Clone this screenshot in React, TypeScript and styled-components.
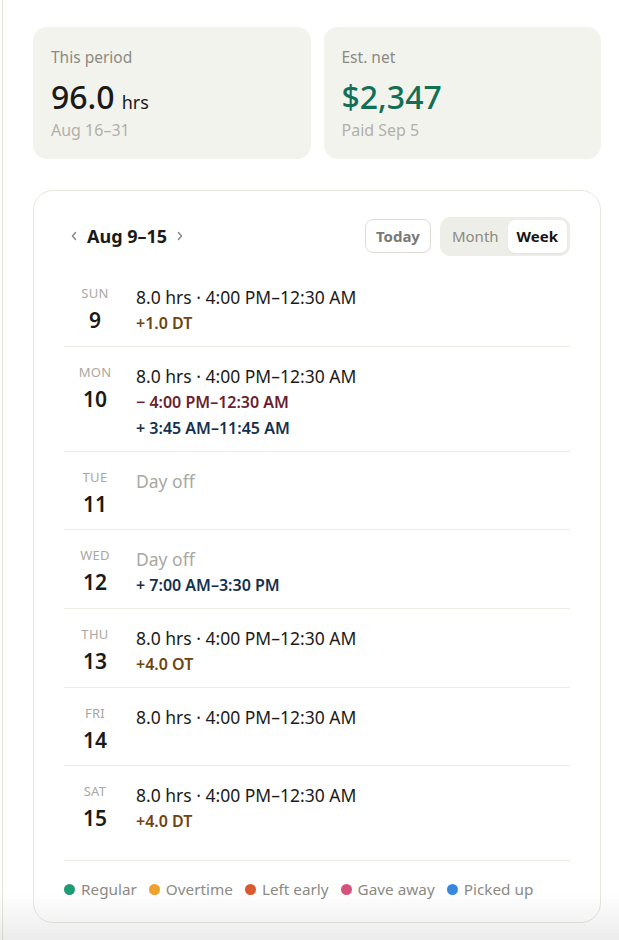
import styled, { createGlobalStyle } from "styled-components";

const GlobalStyle = createGlobalStyle`
  body {
    margin: 0;
    background: #ffffff;
    font-family: "Noto Sans", "Open Sans", "Liberation Sans", sans-serif;
    color: #1b1b19;
  }
`;

const Shell = styled.div`
  margin-left: 2px;
  min-height: 100vh;
  border-left: 1px solid #e7e6dc;
  padding: 27px 18px 18px 30px;
  box-sizing: border-box;
`;

const Stats = styled.div`
  display: grid;
  grid-template-columns: 1fr 1fr;
  gap: 13px;
`;

const StatCard = styled.div`
  background: #f3f3ee;
  border-radius: 14px;
  padding: 17px 18px 16px;
  height: 132px;
  box-sizing: border-box;
`;

const StatLabel = styled.div`
  font-size: 15.5px;
  line-height: 26px;
  color: #8b8a83;
`;

const StatValue = styled.div<{ $tone?: "green" }>`
  font-size: 32px;
  line-height: 44px;
  height: 44px;
  font-weight: 500;
  color: ${({ $tone }) => ($tone === "green" ? "#126f55" : "#1a1a18")};
  margin-top: 5px;
`;

const Unit = styled.span`
  font-size: 18px;
  line-height: 1;
  font-weight: 400;
  margin-left: 7px;
`;

const StatSub = styled.div`
  font-size: 16px;
  line-height: 22px;
  color: #b1b0a9;
`;

const Calendar = styled.section`
  margin-top: 31px;
  border: 1px solid #e8e7df;
  border-radius: 20px;
  padding: 25px 30px 22px;
`;

const Header = styled.div`
  display: flex;
  align-items: center;
  justify-content: space-between;
  height: 40px;
  margin-bottom: 12px;
`;

const RangeNav = styled.div`
  display: flex;
  align-items: center;
  gap: 9px;
  padding-left: 6px;
`;

const Chevron = styled.button`
  border: none;
  background: none;
  padding: 0;
  color: #8a8983;
  display: flex;
  align-items: center;
  cursor: pointer;
`;

const RangeTitle = styled.div`
  font-size: 18px;
  font-weight: 700;
  color: #1a1a18;
`;

const Controls = styled.div`
  display: flex;
  align-items: center;
  gap: 9px;
`;

const TodayButton = styled.button`
  height: 34px;
  padding: 0 10px;
  border: 1px solid #dddbd3;
  border-radius: 8px;
  background: #fff;
  font-family: inherit;
  font-size: 15px;
  font-weight: 700;
  color: #7a7973;
`;

const Segmented = styled.div`
  display: flex;
  background: #eeeee8;
  border-radius: 10px;
  padding: 3px;
  height: 39px;
  box-sizing: border-box;
`;

const SegButton = styled.button<{ $active?: boolean }>`
  border: none;
  border-radius: 7px;
  padding: 0 9px;
  font-family: inherit;
  font-size: 15px;
  font-weight: ${({ $active }) => ($active ? 700 : 400)};
  color: ${({ $active }) => ($active ? "#151513" : "#8b8a83")};
  background: ${({ $active }) => ($active ? "#ffffff" : "transparent")};
  box-shadow: ${({ $active }) => ($active ? "0 1px 2px rgba(0,0,0,0.06)" : "none")};
`;

const Row = styled.div`
  display: flex;
  gap: 10px;
  padding: 16px 0 10px;
  border-bottom: 1px solid #ecebe4;

  &:last-child {
    border-bottom: none;
    padding-bottom: 26px;
  }
`;

const DayCol = styled.div`
  width: 62px;
  display: flex;
  flex-direction: column;
  align-items: center;
  flex-shrink: 0;
`;

const DayName = styled.div`
  font-size: 13px;
  line-height: 18px;
  color: #a9a8a1;
  letter-spacing: 0.3px;
`;

const DayNum = styled.div`
  font-size: 21px;
  line-height: 30px;
  margin-top: 3px;
  font-weight: 600;
  color: #1a1a18;
`;

const Lines = styled.div`
  display: flex;
  flex-direction: column;
`;

const Main = styled.div<{ $off?: boolean }>`
  font-size: 17.5px;
  line-height: 26px;
  color: ${({ $off }) => ($off ? "#a9a8a1" : "#1b1b19")};
`;

const toneColors: Record<string, string> = {
  ot: "#6e4410",
  gave: "#6a1e2f",
  pick: "#14304f",
};

const Sub = styled.div<{ $tone: string }>`
  font-size: 16px;
  line-height: 26px;
  font-weight: 600;
  color: ${({ $tone }) => toneColors[$tone]};
`;

const Legend = styled.div`
  border-top: 1px solid #ecebe4;
  padding-top: 17px;
  display: flex;
  flex-wrap: wrap;
  gap: 12px;
`;

const LegendItem = styled.div`
  display: flex;
  align-items: center;
  gap: 6px;
  font-size: 15.3px;
  line-height: 22px;
  color: #8b8a83;
`;

const Dot = styled.span<{ $color: string }>`
  width: 11px;
  height: 11px;
  border-radius: 50%;
  background: ${({ $color }) => $color};
`;

const BottomFade = styled.div`
  position: fixed;
  left: 0;
  right: 0;
  bottom: 0;
  height: 48px;
  pointer-events: none;
  background: linear-gradient(to bottom, rgba(0, 0, 0, 0), rgba(0, 0, 0, 0.075));
`;

const ChevronIcon = ({ dir }: { dir: "left" | "right" }) => (
  <svg width="8" height="12" viewBox="0 0 8 12" fill="none">
    <path
      d={dir === "left" ? "M5.5 2.5 L2.5 6 L5.5 9.5" : "M2.5 2.5 L5.5 6 L2.5 9.5"}
      stroke="currentColor"
      strokeWidth="1.5"
      strokeLinecap="round"
      strokeLinejoin="round"
    />
  </svg>
);

type Day = {
  name: string;
  num: number;
  main: string;
  off?: boolean;
  subs?: { tone: string; text: string }[];
};

const shift = "8.0 hrs · 4:00 PM–12:30 AM";

const days: Day[] = [
  { name: "SUN", num: 9, main: shift, subs: [{ tone: "ot", text: "+1.0 DT" }] },
  {
    name: "MON",
    num: 10,
    main: shift,
    subs: [
      { tone: "gave", text: "− 4:00 PM–12:30 AM" },
      { tone: "pick", text: "+ 3:45 AM–11:45 AM" },
    ],
  },
  { name: "TUE", num: 11, main: "Day off", off: true },
  { name: "WED", num: 12, main: "Day off", off: true, subs: [{ tone: "pick", text: "+ 7:00 AM–3:30 PM" }] },
  { name: "THU", num: 13, main: shift, subs: [{ tone: "ot", text: "+4.0 OT" }] },
  { name: "FRI", num: 14, main: shift },
  { name: "SAT", num: 15, main: shift, subs: [{ tone: "ot", text: "+4.0 DT" }] },
];

const legend = [
  { label: "Regular", color: "#1f9c74" },
  { label: "Overtime", color: "#f0a02c" },
  { label: "Left early", color: "#d95a30" },
  { label: "Gave away", color: "#d4527c" },
  { label: "Picked up", color: "#3a88de" },
];

export default function App() {
  return (
    <>
      <GlobalStyle />
      <Shell>
        <Stats>
          <StatCard>
            <StatLabel>This period</StatLabel>
            <StatValue>
              96.0<Unit>hrs</Unit>
            </StatValue>
            <StatSub>Aug 16–31</StatSub>
          </StatCard>
          <StatCard>
            <StatLabel>Est. net</StatLabel>
            <StatValue $tone="green">$2,347</StatValue>
            <StatSub>Paid Sep 5</StatSub>
          </StatCard>
        </Stats>

        <Calendar>
          <Header>
            <RangeNav>
              <Chevron aria-label="Previous week">
                <ChevronIcon dir="left" />
              </Chevron>
              <RangeTitle>Aug 9–15</RangeTitle>
              <Chevron aria-label="Next week">
                <ChevronIcon dir="right" />
              </Chevron>
            </RangeNav>
            <Controls>
              <TodayButton>Today</TodayButton>
              <Segmented>
                <SegButton>Month</SegButton>
                <SegButton $active>Week</SegButton>
              </Segmented>
            </Controls>
          </Header>

          <div>
            {days.map((d) => (
              <Row key={d.num}>
                <DayCol>
                  <DayName>{d.name}</DayName>
                  <DayNum>{d.num}</DayNum>
                </DayCol>
                <Lines>
                  <Main $off={d.off}>{d.main}</Main>
                  {d.subs?.map((s) => (
                    <Sub key={s.text} $tone={s.tone}>
                      {s.text}
                    </Sub>
                  ))}
                </Lines>
              </Row>
            ))}
          </div>

          <Legend>
            {legend.map((l) => (
              <LegendItem key={l.label}>
                <Dot $color={l.color} />
                {l.label}
              </LegendItem>
            ))}
          </Legend>
        </Calendar>
      </Shell>
      <BottomFade />
    </>
  );
}
